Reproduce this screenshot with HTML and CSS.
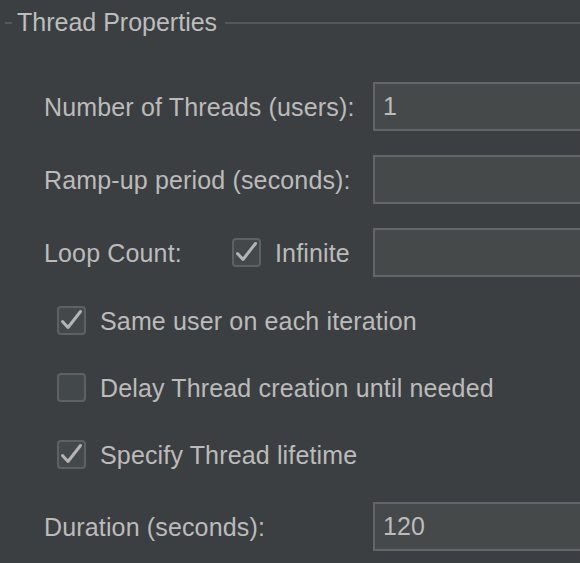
FILE: index.html
```html
<!DOCTYPE html>
<html lang="en">
<head>
<meta charset="utf-8">
<title>Thread Properties</title>
<link rel="stylesheet" href="styles.css">
</head>
<body>
<section class="panel">
  <header class="legend">
    <span class="dash"></span>
    <span class="legend-title">Thread Properties</span>
    <span class="rule"></span>
  </header>
  <div class="form">
    <div class="row field-row">
      <span class="label">Number of Threads (users):</span>
      <div class="field">1</div>
    </div>
    <div class="row field-row">
      <span class="label">Ramp-up period (seconds):</span>
      <div class="field"></div>
    </div>
    <div class="row field-row">
      <span class="label loop">
        <span class="loop-text">Loop Count:</span>
        <span class="check-item">
          <span class="box checked"><svg viewBox="0 0 29 29" class="tick"><path d="M5.5 15.5 L11 21.5 L23.5 5.5"/></svg></span>
          <span>Infinite</span>
        </span>
      </span>
      <div class="field"></div>
    </div>
    <div class="row check-row first-check">
      <span class="check-item">
        <span class="box checked"><svg viewBox="0 0 29 29" class="tick"><path d="M5.5 15.5 L11 21.5 L23.5 5.5"/></svg></span>
        <span>Same user on each iteration</span>
      </span>
    </div>
    <div class="row check-row">
      <span class="check-item">
        <span class="box"></span>
        <span>Delay Thread creation until needed</span>
      </span>
    </div>
    <div class="row check-row">
      <span class="check-item">
        <span class="box checked"><svg viewBox="0 0 29 29" class="tick"><path d="M5.5 15.5 L11 21.5 L23.5 5.5"/></svg></span>
        <span>Specify Thread lifetime</span>
      </span>
    </div>
    <div class="row field-row last-row">
      <span class="label">Duration (seconds):</span>
      <div class="field">120</div>
    </div>
  </div>
</section>
</body>
</html>
```

FILE: styles.css
```css
html, body {
  margin: 0;
  padding: 0;
  overflow: hidden;
}

body {
  background: #3c3f41;
  color: #bbbbbb;
  font-family: "Liberation Sans", Arial, sans-serif;
  font-size: 25px;
  letter-spacing: 0.15px;
  width: 580px;
  height: 563px;
}

.panel {
  padding-top: 8px;
}

.legend {
  display: flex;
  align-items: center;
  height: 28px;
  line-height: 28px;
  padding-left: 5px;
}

.dash {
  width: 7px;
  height: 2px;
  background: #55585a;
  margin-top: 2px;
}

.legend-title {
  padding: 0 8px 0 5px;
  color: #bdbdbd;
  letter-spacing: 0;
}

.rule {
  flex: 1;
  height: 2px;
  background: #55585a;
  margin-top: 2px;
}

.form {
  display: flex;
  flex-direction: column;
  gap: 24px;
  padding-left: 44px;
  margin-top: 46px;
}

.row {
  display: flex;
  align-items: center;
}

.field-row {
  height: 49px;
}

.check-row {
  height: 43px;
  padding-left: 13px;
}

.first-check {
  margin-top: -2px;
}

.last-row {
  margin-top: 2px;
}

.label {
  width: 329px;
  flex: none;
  line-height: 28px;
}

.loop {
  display: flex;
  align-items: center;
}

.loop-text {
  width: 188px;
  flex: none;
}

.field {
  box-sizing: border-box;
  flex: 1;
  height: 49px;
  background: #45494a;
  border: 2px solid #646566;
  border-right: none;
  padding-left: 8px;
  line-height: 45px;
  color: #bbbbbb;
}

.check-item {
  display: flex;
  align-items: center;
  gap: 14px;
  line-height: 28px;
}

.box {
  box-sizing: border-box;
  width: 29px;
  height: 29px;
  border: 2px solid #5e6163;
  border-radius: 4px;
  background: #43494a;
  display: block;
  position: relative;
  flex: none;
}

.tick {
  position: absolute;
  left: -2px;
  top: -2px;
  width: 29px;
  height: 29px;
  fill: none;
  stroke: #b4b4b4;
  stroke-width: 3;
  stroke-linecap: round;
  stroke-linejoin: round;
}
```
